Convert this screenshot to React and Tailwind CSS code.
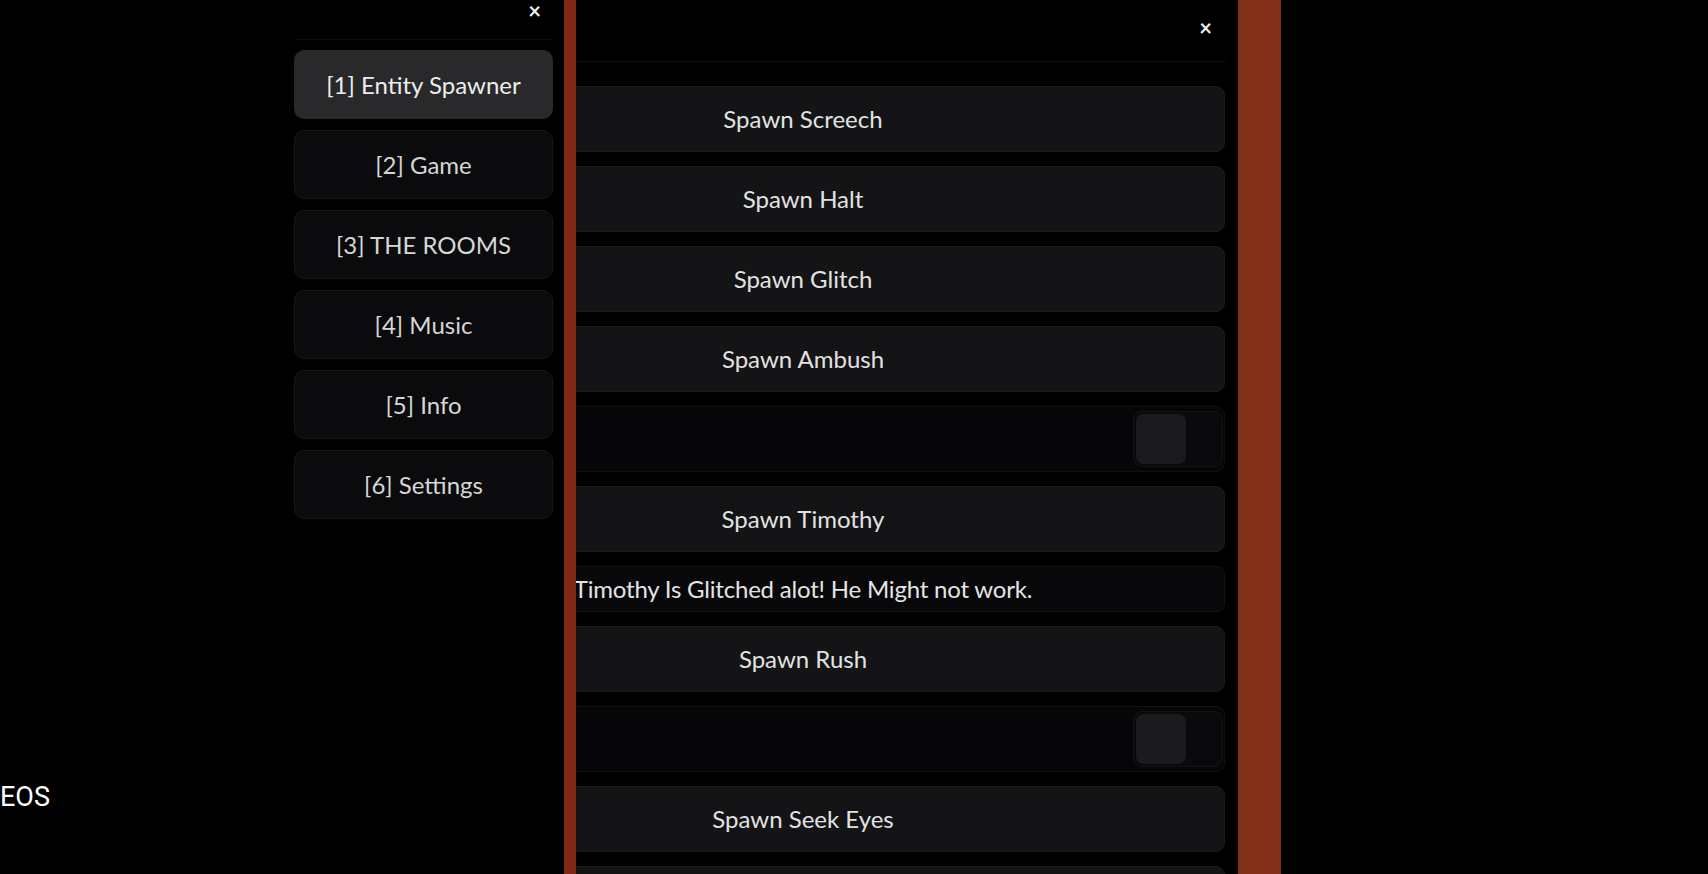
import React from 'react'

const tabs = [
  { label: '[1] Entity Spawner', active: true },
  { label: '[2] Game' },
  { label: '[3] THE ROOMS' },
  { label: '[4] Music' },
  { label: '[5] Info' },
  { label: '[6] Settings' },
]

const rows = [
  { type: 'button', label: 'Spawn Screech' },
  { type: 'button', label: 'Spawn Halt' },
  { type: 'button', label: 'Spawn Glitch' },
  { type: 'button', label: 'Spawn Ambush' },
  { type: 'toggle' },
  { type: 'button', label: 'Spawn Timothy' },
  { type: 'label', label: 'Timothy Is Glitched alot! He Might not work.' },
  { type: 'button', label: 'Spawn Rush' },
  { type: 'toggle' },
  { type: 'button', label: 'Spawn Seek Eyes' },
  { type: 'button', label: '' },
]

function Row({ row }) {
  if (row.type === 'toggle') {
    return (
      <div className="h-[66px] shrink-0 rounded-[9px] border border-[#111114] bg-[#060608] flex items-center justify-end pr-[1px]">
        <div className="h-[56px] w-[90px] rounded-[9px] border border-[#141417] bg-[#0a0a0d] flex items-center pl-[2px]">
          <div className="h-[50px] w-[50px] rounded-[8px] bg-[#1b1b1e]" />
        </div>
      </div>
    )
  }
  if (row.type === 'label') {
    return (
      <div className="h-[46px] shrink-0 rounded-[8px] border border-[#121215] bg-[#08080a] flex items-center justify-center">
        <span className="text-[24px] text-[#e4e4e4] whitespace-nowrap tracking-[-0.2px]">{row.label}</span>
      </div>
    )
  }
  return (
    <div className="h-[66px] shrink-0 rounded-[9px] border border-[#1a1a1d] bg-[#141416] flex items-center justify-center">
      <span className="text-[24px] text-[#e2e2e2] whitespace-nowrap">{row.label}</span>
    </div>
  )
}

export default function App() {
  return (
    <div
      className="relative w-[1708px] h-[874px] bg-black flex overflow-hidden"
      style={{ fontFamily: 'Lato, "Open Sans", sans-serif' }}
    >
      {/* Sidebar window */}
      <div className="w-[564px] shrink-0 flex flex-col pl-[294px] pr-[11px]">
        <div className="h-[40px] flex justify-end items-start pr-[12px] border-b border-[#0c0c0e]">
          <span className="text-[#eeeeee] text-[22px] font-bold leading-none">×</span>
        </div>
        <div className="flex flex-col gap-[11px] mt-[10px]">
          {tabs.map((t) => (
            <div
              key={t.label}
              className={`h-[69px] rounded-[10px] flex items-center justify-center text-[24px] ${
                t.active
                  ? 'bg-[#29292b] text-[#ececec]'
                  : 'bg-[#0b0b0d] border border-[#17171a] text-[#d6d6d6]'
              }`}
            >
              {t.label}
            </div>
          ))}
        </div>
      </div>

      <div className="w-[12px] shrink-0 bg-[#7e2a15]" />

      {/* Main window */}
      <div className="w-[662px] shrink-0 flex flex-col overflow-hidden">
        <div className="h-[62px] shrink-0 flex justify-end items-center pr-[14px] border-b border-[#101012] mr-[12px]">
          <span className="text-[#eeeeee] text-[22px] font-bold leading-none -mt-[6px]">×</span>
        </div>
        <div className="flex flex-col gap-[14px] pt-[24px] ml-[-195px] mr-[13px]">
          {rows.map((r, i) => (
            <Row key={i} row={r} />
          ))}
        </div>
      </div>

      <div className="w-[43px] shrink-0 bg-[#82301a]" />

      <div
        className="absolute left-0 top-[777px] text-[27px] text-white"
        style={{ fontFamily: 'Roboto, sans-serif' }}
      >
        EOS
      </div>
    </div>
  )
}
